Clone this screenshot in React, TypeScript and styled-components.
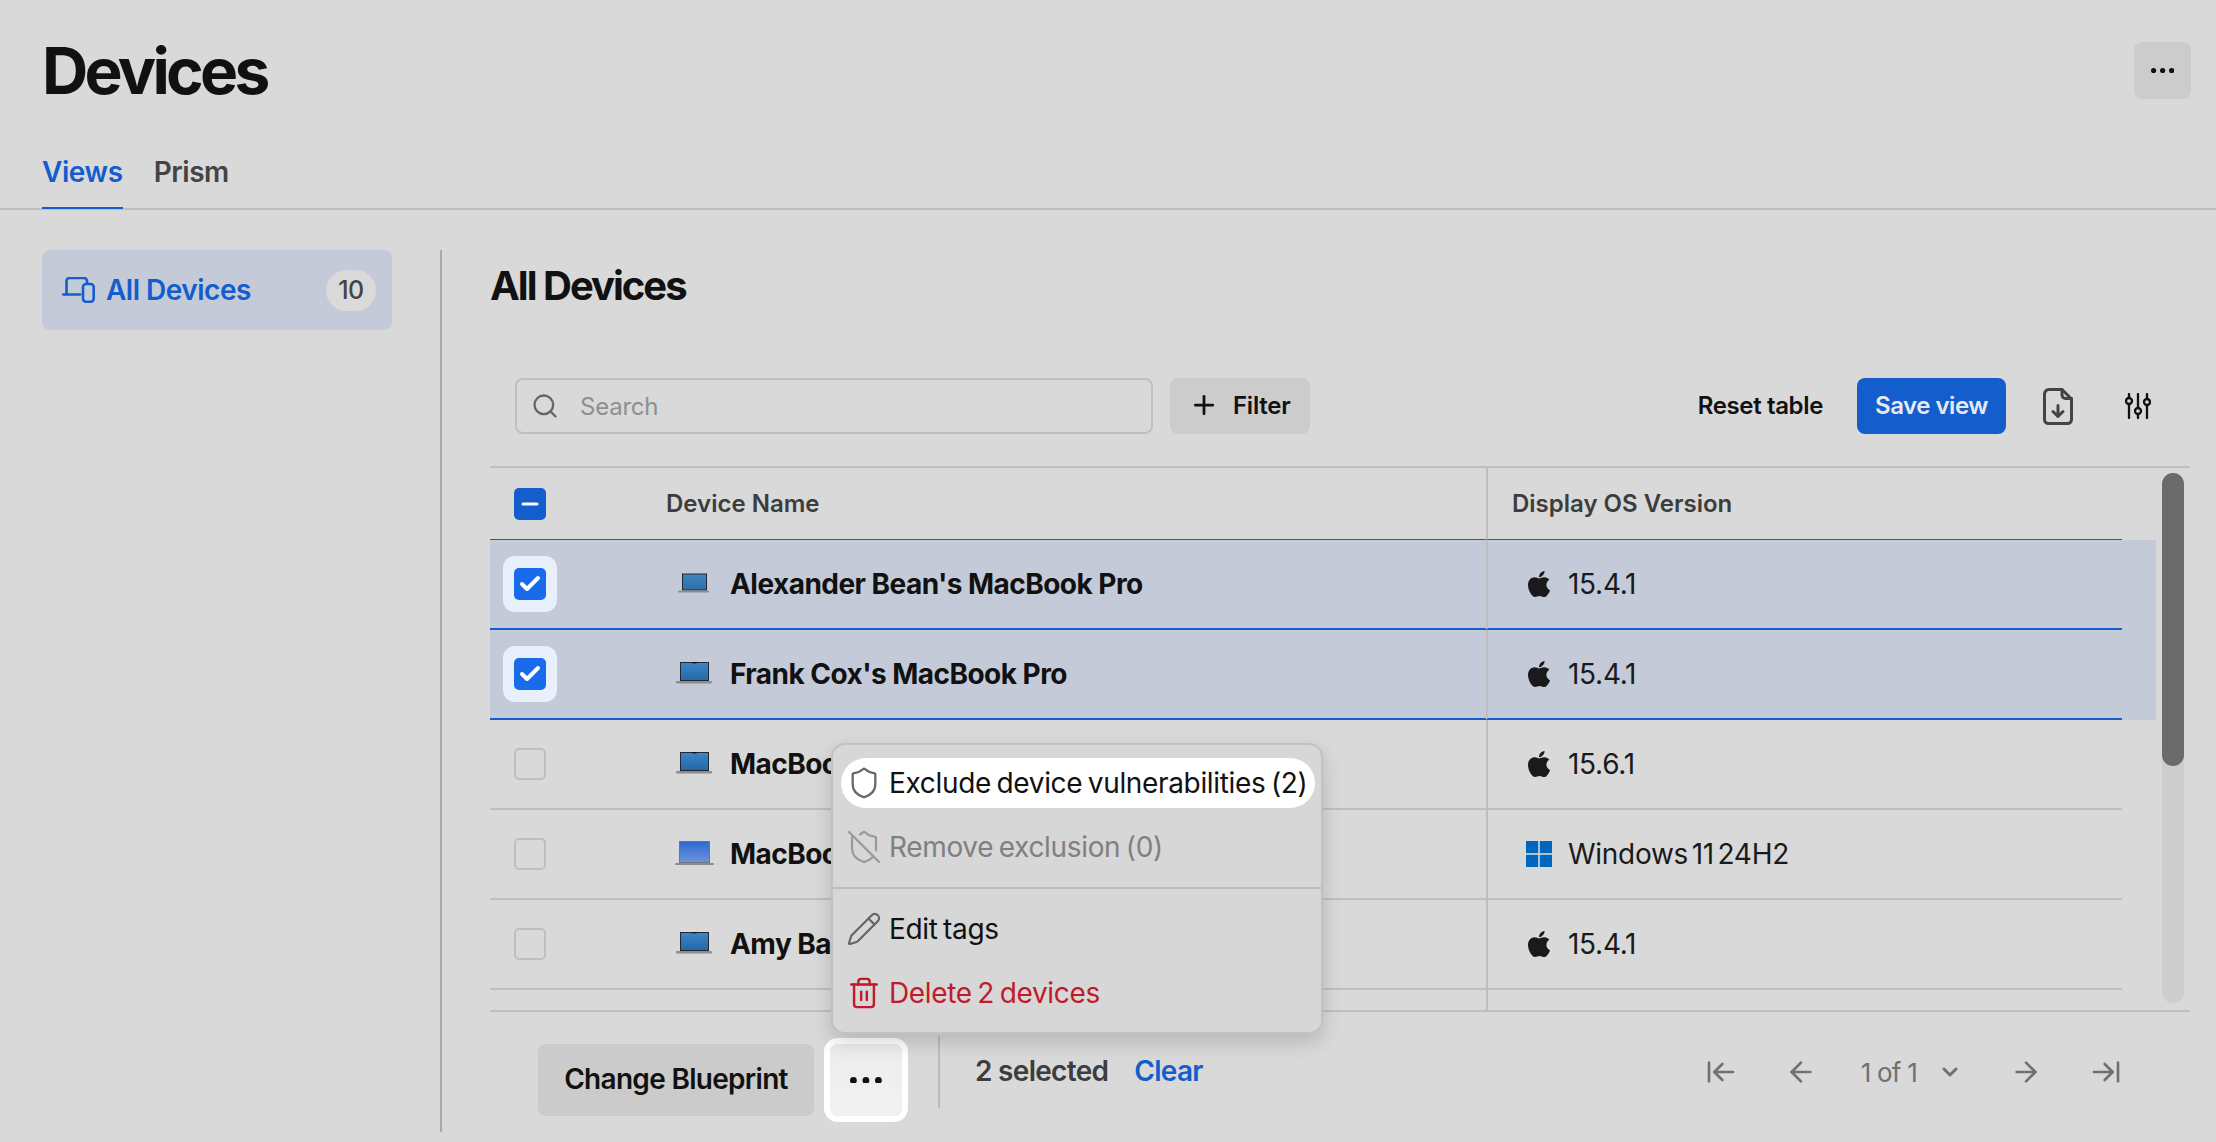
import { ReactElement, useId } from "react";
import styled, { createGlobalStyle } from "styled-components";
import {
  ArrowLeft,
  ArrowLeftToLine,
  ArrowRight,
  ArrowRightToLine,
  Check,
  ChevronDown,
  Minus,
  Pencil,
  Plus,
  Search,
  Shield,
  ShieldOff,
  Trash2,
} from "lucide-react";
import { FaApple } from "react-icons/fa";

const BLUE = "#145dcc";
const LINE = "#bfbfbf";
const BG = "#d9d9d9";

const GlobalStyle = createGlobalStyle`
  html, body {
    margin: 0;
    padding: 0;
    background: ${BG};
    overflow: hidden;
  }
  * {
    box-sizing: border-box;
  }
  body {
    font-family: Inter, "Liberation Sans", sans-serif;
    color: #111;
  }
`;

const Page = styled.div`
  display: flex;
  flex-direction: column;
  width: 2216px;
  height: 1142px;
  overflow: hidden;
`;

const Header = styled.header`
  height: 210px;
  padding-top: 42px;
  border-bottom: 2px solid ${LINE};
`;

const TitleRow = styled.div`
  display: flex;
  align-items: center;
  justify-content: space-between;
  height: 57px;
  padding: 0 25px 0 42px;
`;

const Title = styled.h1`
  margin: 0;
  font-size: 64px;
  line-height: 57px;
  font-weight: 700;
  letter-spacing: -0.058em;
  color: #111;
`;

const TopMore = styled.button`
  display: flex;
  align-items: center;
  justify-content: center;
  width: 57px;
  height: 57px;
  border: none;
  border-radius: 8px;
  background: #cccccc;
`;

const Tabs = styled.nav`
  display: flex;
  gap: 31px;
  height: 73px;
  margin-top: 36px;
  padding-left: 42px;
`;

const Tab = styled.a<{ $active?: boolean }>`
  display: flex;
  align-items: center;
  height: 74px;
  padding-top: 2px;
  font-size: 28px;
  font-weight: 600;
  letter-spacing: -0.015em;
  color: ${(p) => (p.$active ? BLUE : "#444")};
  border-bottom: 2px solid ${(p) => (p.$active ? BLUE : "transparent")};
`;

const Body = styled.div`
  display: flex;
  flex: 1;
  min-height: 0;
  padding-top: 40px;
  padding-bottom: 10px;
`;

const Sidebar = styled.aside`
  flex: none;
  width: 442px;
  padding-left: 42px;
  border-right: 2px solid #a9a9a9;
`;

const SideItem = styled.a`
  display: flex;
  align-items: center;
  gap: 11px;
  width: 350px;
  height: 80px;
  padding: 0 16px 0 20px;
  border-radius: 8px;
  background: #c4cad8;
  color: ${BLUE};
  font-size: 28px;
  font-weight: 600;
  letter-spacing: -0.018em;
`;

const Badge = styled.span`
  display: flex;
  align-items: center;
  justify-content: center;
  width: 50px;
  height: 41px;
  margin-left: auto;
  border-radius: 21px;
  background: #dadada;
  color: #444;
  font-size: 25px;
  font-weight: 500;
`;

const Content = styled.main`
  display: flex;
  flex: 1;
  flex-direction: column;
  min-width: 0;
  padding: 11px 26px 0 48px;
`;

const Heading = styled.h2`
  margin: 0;
  font-size: 40px;
  line-height: 50px;
  font-weight: 700;
  letter-spacing: -0.05em;
  color: #111;
`;

const Toolbar = styled.div`
  display: flex;
  align-items: center;
  height: 56px;
  margin-top: 67px;
  padding: 0 39px 0 25px;
`;

const SearchBox = styled.label`
  display: flex;
  align-items: center;
  gap: 21px;
  width: 638px;
  height: 56px;
  padding-left: 14px;
  border: 2px solid ${LINE};
  border-radius: 8px;
  color: #666;
`;

const Placeholder = styled.span`
  font-size: 24px;
  letter-spacing: -0.01em;
  color: #8f8f8f;
`;

const FilterButton = styled.button`
  display: flex;
  align-items: center;
  gap: 14px;
  height: 56px;
  margin-left: 17px;
  padding: 0 19px 2px 19px;
  border: none;
  border-radius: 8px;
  background: #cccccc;
  color: #111;
  font: 600 24px Inter, sans-serif;
  letter-spacing: -0.01em;
`;

const ResetButton = styled.button`
  margin-left: auto;
  padding: 0 0 2px;
  border: none;
  background: none;
  color: #111;
  font: 600 24px Inter, sans-serif;
  letter-spacing: -0.015em;
`;

const SaveButton = styled.button`
  width: 149px;
  height: 56px;
  margin-left: 34px;
  padding: 0 0 2px;
  border: none;
  border-radius: 8px;
  background: ${BLUE};
  color: #e6e9f2;
  font: 600 24px Inter, sans-serif;
  letter-spacing: -0.02em;
`;

const ToolIcons = styled.div`
  display: flex;
  align-items: center;
  gap: 52px;
  margin-left: 37px;
`;

const Table = styled.section`
  display: flex;
  height: 546px;
  margin-top: 32px;
  border-top: 2px solid ${LINE};
  border-bottom: 2px solid ${LINE};
  overflow: hidden;
`;

const Rows = styled.div`
  flex: none;
  width: 1666px;
`;

const Row = styled.div<{ $selected?: boolean }>`
  display: grid;
  grid-template-columns: 176px 820px 636px 34px;
  height: 90px;
  background: ${(p) => (p.$selected ? "#c4cad8" : "transparent")};
  --row-line: ${(p) => (p.$selected ? BLUE : LINE)};
  --row-line-width: 2px;
`;

const HeaderRow = styled(Row)`
  height: 72px;
  --row-line: ${BLUE};
  --row-line-width: 1.5px;
`;

const Cell = styled.div`
  display: flex;
  align-items: center;
  min-width: 0;
  border-bottom: var(--row-line-width) solid var(--row-line);
`;

const SelectCell = styled(Cell)`
  padding-left: 13px;
`;

const NameCell = styled(Cell)`
  gap: 15px;
  padding-left: 9px;
`;

const OsCell = styled(Cell)`
  padding-left: 24px;
  border-left: 2px solid ${LINE};
`;

const OsValue = styled.span`
  display: flex;
  align-items: center;
  gap: 16px;
  padding-left: 14px;
  font-size: 28px;
  font-weight: 400;
  letter-spacing: -0.01em;
  word-spacing: -4px;
  color: #1a1a1a;
`;

const OsGlyph = styled.span`
  display: flex;
  justify-content: flex-start;
  width: 26px;
`;

const ColumnTitle = styled.span`
  font-size: 24px;
  font-weight: 600;
  letter-spacing: 0;
  color: #3d3d3d;
`;

const DeviceName = styled.span`
  font-size: 28px;
  font-weight: 700;
  letter-spacing: -0.019em;
  color: #111;
  white-space: nowrap;
`;

const CheckHalo = styled.span<{ $selected?: boolean }>`
  display: flex;
  padding: 12px 11px;
  border-radius: 12px;
  background: ${(p) => (p.$selected ? "#e8f0fb" : "transparent")};
`;

const CheckBox = styled.span<{ $state: "on" | "off" | "mixed" }>`
  display: flex;
  align-items: center;
  justify-content: center;
  width: 32px;
  height: 32px;
  border-radius: 5px;
  color: #fff;
  background: ${(p) =>
    p.$state === "on" ? "#1a6bec" : p.$state === "mixed" ? BLUE : "transparent"};
  border: ${(p) => (p.$state === "off" ? `2px solid ${LINE}` : "none")};
`;

const ScrollTrack = styled.div`
  flex: none;
  width: 22px;
  margin: 5px 6px 7px 6px;
  border-radius: 11px;
  background: #cdcdcd;
`;

const ScrollThumb = styled.div`
  height: 293px;
  border-radius: 11px;
  background: #6b6b6b;
`;

const Footer = styled.footer`
  display: flex;
  align-items: flex-start;
  padding: 24px 0 0 48px;
`;

const ActionGroup = styled.div`
  display: flex;
  gap: 16px;
  margin-top: 8px;
`;

const BlueprintButton = styled.button`
  width: 276px;
  height: 72px;
  padding: 0 0 2px;
  border: none;
  border-radius: 8px;
  background: #cbcbcb;
  color: #111;
  font: 600 28px Inter, sans-serif;
  letter-spacing: -0.025em;
`;

const MoreAnchor = styled.div`
  position: relative;
`;

const MoreButton = styled.button`
  display: flex;
  align-items: center;
  justify-content: center;
  width: 72px;
  height: 72px;
  border: none;
  border-radius: 8px;
  background: linear-gradient(180deg, #ececec, #f2f2f2);
  box-shadow: 0 0 0 6px #fff;
`;

const Menu = styled.div`
  position: absolute;
  left: 1px;
  bottom: calc(100% + 10px);
  width: 492px;
  padding: 13px 6px 14px 8px;
  border: 2px solid #c2c2c2;
  border-radius: 14px;
  background: #d7d7d7;
  box-shadow: 0 8px 20px rgba(0, 0, 0, 0.16);
  z-index: 5;
`;

const MenuGroup = styled.div`
  display: flex;
  flex-direction: column;
  gap: 14px;
`;

const MenuItem = styled.div<{ $tone?: "hover" | "muted" | "danger" }>`
  display: flex;
  align-items: center;
  gap: 10px;
  height: 50px;
  padding-left: 8px;
  border-radius: 25px;
  font-size: 28px;
  font-weight: 400;
  letter-spacing: -0.012em;
  word-spacing: -2px;
  white-space: nowrap;
  background: ${(p) => (p.$tone === "hover" ? "#fff" : "transparent")};
  color: ${(p) =>
    p.$tone === "muted" ? "#808080" : p.$tone === "danger" ? "#c21a2a" : "#111"};
`;

const MenuIcon = styled.span<{ $color: string }>`
  display: flex;
  justify-content: center;
  flex: none;
  width: 30px;
  color: ${(p) => p.$color};

  & svg {
    flex: none;
  }
`;

const MenuDivider = styled.hr`
  height: 2px;
  margin: 15px -6px 15px -8px;
  border: none;
  background: #bdbdbd;
`;

const Selection = styled.div`
  display: flex;
  align-items: center;
  gap: 26px;
  height: 72px;
  margin-left: 36px;
  padding: 0 0 2px 35px;
  border-left: 2px solid #bbbbbb;
  font-size: 28px;
  font-weight: 600;
  letter-spacing: -0.025em;
  color: #3d3d3d;
`;

const ClearLink = styled.a`
  color: ${BLUE};
`;

const Pager = styled.div`
  display: flex;
  align-items: center;
  gap: 48px;
  height: 72px;
  margin-left: auto;
  padding-right: 68px;
  color: #707070;
`;

const PageSelect = styled.div`
  display: flex;
  align-items: center;
  gap: 21px;
  margin-left: -4px;
  font-size: 26px;
  letter-spacing: -0.03em;
`;

const Dots = ({ r, gap }: { r: number; gap: number }): ReactElement => (
  <svg width={gap * 2 + r * 2} height={r * 2} fill="#111">
    <circle cx={r} cy={r} r={r} />
    <circle cx={r + gap} cy={r} r={r} />
    <circle cx={r + gap * 2} cy={r} r={r} />
  </svg>
);

const DevicesIcon = (): ReactElement => (
  <svg width="33" height="26" viewBox="0 0 33 26" fill="none" stroke={BLUE} strokeWidth="2.6" strokeLinecap="round" strokeLinejoin="round">
    <path d="M4.5 17V4a3 3 0 0 1 3-3H22a3 3 0 0 1 3 3v2" />
    <path d="M1.3 17.5H18" />
    <rect x="21" y="7" width="10.7" height="17.7" rx="3" />
  </svg>
);

const FileDownIcon = (): ReactElement => (
  <svg width="30" height="37" viewBox="0 0 30 37" fill="none" stroke="#444" strokeWidth="3" strokeLinecap="round" strokeLinejoin="round">
    <path d="M6 1.5h13l9.5 9.5v20.5a4 4 0 0 1-4 4H5.5a4 4 0 0 1-4-4V6a4.5 4.5 0 0 1 4.5-4.5z" />
    <path d="M19 1.5V7a3.5 3.5 0 0 0 3.5 3.5h6" />
    <path d="M15 17.5v10.5M10 23.5l5 5 5-5" />
  </svg>
);

const SlidersIcon = (): ReactElement => (
  <svg width="26" height="26" viewBox="0 0 26 26" fill="none" stroke="#111" strokeWidth="2.3" strokeLinecap="round">
    <path d="M4 1v4M4 11v14M13 1v14M13 21v4M22 1v5M22 12v13" />
    <circle cx="4" cy="8" r="3" />
    <circle cx="13" cy="18" r="3" />
    <circle cx="22" cy="9" r="3" />
  </svg>
);

const WindowsIcon = (): ReactElement => (
  <svg width="26" height="26" viewBox="0 0 26 26" fill="#0067c0">
    <rect x="0" y="0" width="12.2" height="12.2" />
    <rect x="13.8" y="0" width="12.2" height="12.2" />
    <rect x="0" y="13.8" width="12.2" height="12.2" />
    <rect x="13.8" y="13.8" width="12.2" height="12.2" />
  </svg>
);

type LaptopKind = "air" | "pro" | "wide";

const laptopShapes = {
  air: { fx: 7, fy: 2.5, fw: 25, fh: 17, bx: 3, bw: 31, bh: 2, top: "#3d86c4", bottom: "#2f6fa8", notch: false },
  pro: { fx: 5, fy: 1, fw: 29, fh: 19, bx: 1, bw: 36, bh: 2.5, top: "#3a86c8", bottom: "#2468a8", notch: true },
  wide: { fx: 4, fy: 0, fw: 31, fh: 22, bx: 0, bw: 39, bh: 2, top: "#2f68cf", bottom: "#6d94dc", notch: false },
};

const Laptop = ({ kind }: { kind: LaptopKind }): ReactElement => {
  const id = useId();
  const s = laptopShapes[kind];
  return (
    <svg width="40" height="26" viewBox="0 0 40 26" style={{ flex: "none" }}>
      <defs>
        <linearGradient id={id} x1="0" y1="0" x2="0" y2="1">
          <stop offset="0" stopColor={s.top} />
          <stop offset="1" stopColor={s.bottom} />
        </linearGradient>
      </defs>
      <rect x={s.fx} y={s.fy} width={s.fw} height={s.fh} fill={kind === "wide" ? "#6f7480" : "#23272e"} />
      <rect x={s.fx + 1} y={s.fy + 1} width={s.fw - 2} height={s.fh - 2} fill={`url(#${id})`} />
      {s.notch && <rect x={s.fx + s.fw / 2 - 2} y={s.fy} width="4" height="1.4" fill="#111" />}
      <rect x={s.bx} y={s.fy + s.fh} width={s.bw} height={s.bh} rx="1" fill="#8a8d92" />
    </svg>
  );
};

const devices: {
  name: string;
  os: string;
  kind: LaptopKind;
  windows?: boolean;
  selected?: boolean;
}[] = [
  { name: "Alexander Bean's MacBook Pro", os: "15.4.1", kind: "air", selected: true },
  { name: "Frank Cox's MacBook Pro", os: "15.4.1", kind: "pro", selected: true },
  { name: "MacBook Pro", os: "15.6.1", kind: "pro" },
  { name: "MacBook Pro", os: "Windows 11 24H2", kind: "wide", windows: true },
  { name: "Amy Baker's MacBook Pro", os: "15.4.1", kind: "pro" },
];

export default function App(): ReactElement {
  return (
    <Page>
      <GlobalStyle />
      <Header>
        <TitleRow>
          <Title>Devices</Title>
          <TopMore aria-label="More">
            <Dots r={2.6} gap={9} />
          </TopMore>
        </TitleRow>
        <Tabs>
          <Tab $active>Views</Tab>
          <Tab>Prism</Tab>
        </Tabs>
      </Header>
      <Body>
        <Sidebar>
          <SideItem>
            <DevicesIcon />
            All Devices
            <Badge>10</Badge>
          </SideItem>
        </Sidebar>
        <Content>
          <Heading>All Devices</Heading>
          <Toolbar>
            <SearchBox>
              <Search size={28} strokeWidth={2} />
              <Placeholder>Search</Placeholder>
            </SearchBox>
            <FilterButton>
              <Plus size={30} strokeWidth={2.2} />
              Filter
            </FilterButton>
            <ResetButton>Reset table</ResetButton>
            <SaveButton>Save view</SaveButton>
            <ToolIcons>
              <FileDownIcon />
              <SlidersIcon />
            </ToolIcons>
          </Toolbar>
          <Table>
            <Rows>
              <HeaderRow>
                <SelectCell>
                  <CheckHalo>
                    <CheckBox $state="mixed">
                      <Minus size={24} strokeWidth={3} />
                    </CheckBox>
                  </CheckHalo>
                </SelectCell>
                <Cell>
                  <ColumnTitle>Device Name</ColumnTitle>
                </Cell>
                <OsCell>
                  <ColumnTitle>Display OS Version</ColumnTitle>
                </OsCell>
                <div />
              </HeaderRow>
              {devices.map((d, i) => (
                <Row key={i} $selected={d.selected}>
                  <SelectCell>
                    <CheckHalo $selected={d.selected}>
                      <CheckBox $state={d.selected ? "on" : "off"}>
                        {d.selected && <Check size={24} strokeWidth={4} />}
                      </CheckBox>
                    </CheckHalo>
                  </SelectCell>
                  <NameCell>
                    <Laptop kind={d.kind} />
                    <DeviceName>{d.name}</DeviceName>
                  </NameCell>
                  <OsCell>
                    <OsValue>
                      <OsGlyph>{d.windows ? <WindowsIcon /> : <FaApple size={30} color="#1a1a1a" />}</OsGlyph>
                      {d.os}
                    </OsValue>
                  </OsCell>
                  <div />
                </Row>
              ))}
              <Row>
                <Cell />
                <Cell />
                <OsCell />
                <div />
              </Row>
            </Rows>
            <ScrollTrack>
              <ScrollThumb />
            </ScrollTrack>
          </Table>
          <Footer>
            <ActionGroup>
              <BlueprintButton>Change Blueprint</BlueprintButton>
              <MoreAnchor>
                <MoreButton aria-label="More actions">
                  <Dots r={3.4} gap={12.5} />
                </MoreButton>
                <Menu>
                  <MenuGroup>
                    <MenuItem $tone="hover">
                      <MenuIcon $color="#666">
                        <Shield size={34} strokeWidth={1.6} />
                      </MenuIcon>
                      Exclude device vulnerabilities (2)
                    </MenuItem>
                    <MenuItem $tone="muted">
                      <MenuIcon $color="#9a9a9a">
                        <ShieldOff size={36} strokeWidth={1.5} />
                      </MenuIcon>
                      Remove exclusion (0)
                    </MenuItem>
                  </MenuGroup>
                  <MenuDivider />
                  <MenuGroup>
                    <MenuItem>
                      <MenuIcon $color="#666">
                        <Pencil size={36} strokeWidth={1.5} />
                      </MenuIcon>
                      Edit tags
                    </MenuItem>
                    <MenuItem $tone="danger">
                      <MenuIcon $color="#c21a2a">
                        <Trash2 size={34} strokeWidth={1.7} />
                      </MenuIcon>
                      Delete 2 devices
                    </MenuItem>
                  </MenuGroup>
                </Menu>
              </MoreAnchor>
            </ActionGroup>
            <Selection>
              2 selected
              <ClearLink>Clear</ClearLink>
            </Selection>
            <Pager>
              <ArrowLeftToLine size={32} strokeWidth={2} />
              <ArrowLeft size={32} strokeWidth={2} />
              <PageSelect>
                1 of 1
                <ChevronDown size={24} strokeWidth={3} />
              </PageSelect>
              <ArrowRight size={32} strokeWidth={2} />
              <ArrowRightToLine size={32} strokeWidth={2} />
            </Pager>
          </Footer>
        </Content>
      </Body>
    </Page>
  );
}
